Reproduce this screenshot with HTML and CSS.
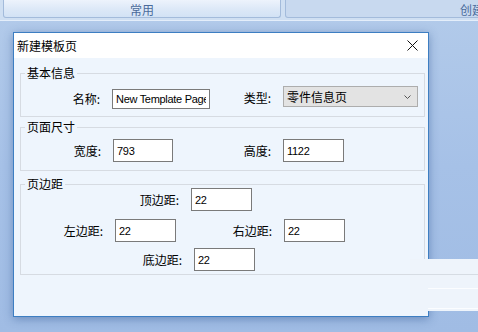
FILE: index.html
```html
<!DOCTYPE html>
<html lang="zh-CN">
<head>
    <meta charset="UTF-8">
    <meta name="viewport" content="width=device-width, initial-scale=1.0">
    <title>新建模板页</title>
    <link rel="stylesheet" href="styles.css">
</head>
<body>
    <div class="ribbon">
        <div class="tab tab-main">常用</div>
        <div class="tab tab-create">创建</div>
    </div>

    <div class="dialog">
        <div class="titlebar">
            <span class="title">新建模板页</span>
            <svg class="close" width="11" height="11" viewBox="0 0 11 11">
                <path d="M0.5 0.5 L10.5 10.5 M10.5 0.5 L0.5 10.5" stroke="#111" stroke-width="1" fill="none"/>
            </svg>
        </div>

        <div class="dialog-body">
            <fieldset class="group group-basic">
                <legend>基本信息</legend>
                <div class="row">
                    <div class="field f-name">
                        <label for="tpl-name">名称:</label>
                        <input type="text" id="tpl-name" class="name-input" value="New Template Page">
                    </div>
                    <div class="field f-type">
                        <label>类型:</label>
                        <div class="combo">
                            <span>零件信息页</span>
                            <svg width="7" height="4" viewBox="0 0 7 4">
                                <path d="M0.5 0.5 L3.5 3.5 L6.5 0.5" stroke="#555" stroke-width="1" fill="none"/>
                            </svg>
                        </div>
                    </div>
                </div>
            </fieldset>

            <fieldset class="group group-size">
                <legend>页面尺寸</legend>
                <div class="row">
                    <div class="field f-width">
                        <label for="page-w">宽度:</label>
                        <input type="text" id="page-w" value="793">
                    </div>
                    <div class="field f-height">
                        <label for="page-h">高度:</label>
                        <input type="text" id="page-h" value="1122">
                    </div>
                </div>
            </fieldset>

            <fieldset class="group group-margin">
                <legend>页边距</legend>
                <div class="row row-top">
                    <div class="field f-top">
                        <label for="m-top">顶边距:</label>
                        <input type="text" id="m-top" value="22">
                    </div>
                </div>
                <div class="row row-mid">
                    <div class="field f-left">
                        <label for="m-left">左边距:</label>
                        <input type="text" id="m-left" value="22">
                    </div>
                    <div class="field f-right">
                        <label for="m-right">右边距:</label>
                        <input type="text" id="m-right" value="22">
                    </div>
                </div>
                <div class="row row-bottom">
                    <div class="field f-bottom">
                        <label for="m-bottom">底边距:</label>
                        <input type="text" id="m-bottom" value="22">
                    </div>
                </div>
            </fieldset>
        </div>
    </div>

    <!-- leftover panel from the window behind -->
    <div class="ghost">
        <div class="ghost-rule"></div>
        <div class="ghost-shine first"></div>
        <div class="ghost-shine"></div>
    </div>
</body>
</html>
```

FILE: styles.css
```css
body {
    margin: 0;
    width: 478px;
    height: 332px;
    overflow: hidden;
    position: relative;
    font-family: "Noto Sans CJK SC", "Liberation Sans", sans-serif;
    font-size: 12px;
    color: #000;
    background: linear-gradient(180deg, #b3cbea 0%, #a6c1e7 50%, #a0bce4 100%);
}
.ribbon {
    display: flex;
    gap: 4px;
    height: 20px;
    padding-left: 3px;
    background: #cfdff2;
    border-bottom: 1px solid #e4eefa;
    overflow: hidden;
}
.tab {
    flex: none;
    box-sizing: border-box;
    height: 18px;
    padding-top: 2px;
    line-height: 15px;
    text-align: center;
    color: #4a6b9b;
    border: 1px solid #a3bbdb;
    border-top: none;
    border-radius: 0 0 3px 3px;
}
.tab-main {
    width: 278px;
    background: linear-gradient(180deg, #edf3fc 0%, #dce8f7 55%, #d2e2f5 100%);
}
.tab-create {
    width: 374px;
    background: #c8d9ef;
}
.dialog {
    position: absolute;
    left: 13px;
    top: 32px;
    width: 416px;
    height: 285px;
    box-sizing: border-box;
    border: 1px solid #3d7ec2;
    background: #eef5fd;
    box-shadow: 0 2px 9px rgba(40, 80, 140, 0.45);
}
.titlebar {
    display: flex;
    align-items: center;
    justify-content: space-between;
    height: 25px;
    padding: 0 10px 0 3px;
    background: #fff;
}
.title {
    line-height: 14px;
}
.close {
    display: block;
}
.dialog-body {
    padding: 0 3px 0 6px;
}
.group {
    margin: 0;
    padding: 0;
    min-width: 0;
    border: 1px solid #d6dbe2;
}
.group legend {
    margin-left: 4px;
    padding: 0 2px;
    line-height: 12px;
}
.group-basic {
    margin-top: 9px;
    padding-bottom: 7px;
}
.group-basic .row {
    padding-top: 7px;
    align-items: flex-start;
}
.group-size {
    margin-top: 4px;
    padding-bottom: 8px;
}
.group-size .row {
    padding-top: 6px;
}
.group-margin {
    margin-top: 7px;
    padding-bottom: 3px;
}
.row {
    display: flex;
}
.row-top {
    margin-top: -2px;
}
.row-mid {
    margin-top: 8px;
}
.row-bottom {
    margin-top: 6px;
}
.field {
    display: flex;
    align-items: center;
    gap: 12px;
}
.field label {
    width: 60px;
    text-align: right;
    line-height: 14px;
}
.field input {
    box-sizing: border-box;
    width: 61px;
    height: 23px;
    margin: 0;
    padding: 0 3px;
    border: 1px solid #7a7a7a;
    border-radius: 0;
    background: #fff;
    font-family: "Liberation Sans", Arial, sans-serif;
    font-size: 11px;
    letter-spacing: -0.3px;
    color: #000;
    outline: none;
}
.field .name-input {
    width: 98px;
    height: 20px;
}
.f-name {
    margin-left: 19px;
    margin-top: 3px;
}
.f-type {
    margin-left: 1px;
}
.f-type label {
    padding-top: 2px;
}
.combo {
    display: flex;
    align-items: center;
    justify-content: space-between;
    box-sizing: border-box;
    width: 135px;
    height: 21px;
    padding: 0 6px 0 3px;
    background: #e3e3e3;
    border: 1px solid #adadad;
}
.combo span {
    line-height: 14px;
}
.f-width {
    margin-left: 20px;
}
.f-width input {
    width: 60px;
}
.f-height {
    margin-left: 38px;
}
.f-top {
    margin-left: 98px;
}
.f-left {
    margin-left: 22px;
}
.f-right {
    margin-left: 36px;
}
.f-bottom {
    margin-left: 101px;
}
.ghost {
    position: absolute;
    left: 410px;
    top: 259px;
    width: 68px;
    height: 52px;
    background: #eef4fb;
}
.ghost-rule {
    height: 1px;
    margin-top: 15px;
    background: #d6dce3;
}
.ghost-shine {
    height: 1px;
    margin: 19px 0 0 18px;
    background: #fbfdff;
}
.ghost-shine.first {
    margin-top: 13px;
}
```
